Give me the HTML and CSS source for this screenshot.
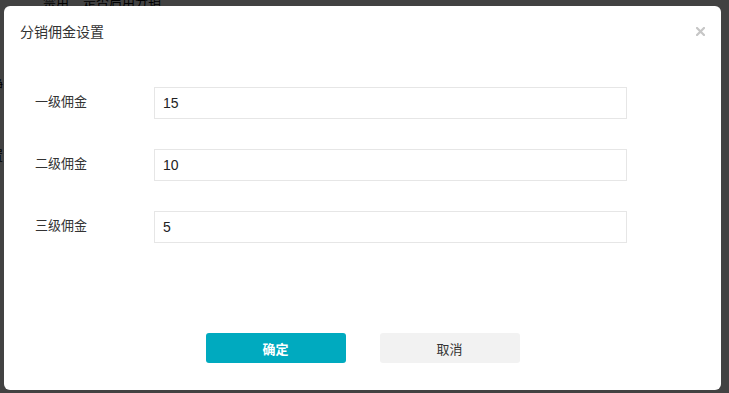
FILE: index.html
```html
<!DOCTYPE html>
<html lang="zh">
<head>
<meta charset="utf-8">
<title>分销佣金设置</title>
<link rel="stylesheet" href="styles.css">
</head>
<body>
<div class="page">
  <div class="page-head">
    <span class="ph-a">禁用</span>
    <span class="ph-b">是否启用分销</span>
  </div>
  <div class="page-side">
    <span class="side-a">静</span>
    <span class="side-b">置</span>
  </div>
</div>
<div class="overlay"></div>
<div class="modal">
  <div class="modal-header">
    <span class="modal-title">分销佣金设置</span>
    <span class="modal-close">
      <svg width="9" height="9" viewBox="0 0 9 9"><path d="M1 1L8 8M8 1L1 8" stroke="#c6c6c6" stroke-width="2.2" stroke-linecap="square"/></svg>
    </span>
  </div>
  <div class="modal-body">
    <div class="form-row">
      <label class="form-label">一级佣金</label>
      <input class="form-input" type="text" value="15">
    </div>
    <div class="form-row">
      <label class="form-label">二级佣金</label>
      <input class="form-input" type="text" value="10">
    </div>
    <div class="form-row">
      <label class="form-label">三级佣金</label>
      <input class="form-input" type="text" value="5">
    </div>
  </div>
  <div class="modal-footer">
    <button class="btn btn-primary">确定</button>
    <button class="btn btn-default">取消</button>
  </div>
</div>
</body>
</html>
```
FILE: styles.css
```css
html, body {
  margin: 0;
  padding: 0;
  width: 729px;
  height: 393px;
  overflow: hidden;
  font-family: "Liberation Sans", "Noto Sans CJK SC", sans-serif;
}
body {
  background: #ffffff;
  position: relative;
}
.page {
  position: absolute;
  inset: 0;
  background: #ffffff;
}
.page-head {
  display: flex;
  gap: 14px;
  padding-left: 43px;
  margin-top: -6px;
  font-size: 13px;
  line-height: 16px;
  color: #000;
}
.page-side {
  display: flex;
  flex-direction: column;
  font-size: 13px;
  color: #000;
  margin-left: -10px;
}
.side-a { margin-top: 64px; }
.side-b { margin-top: 52px; }
.overlay {
  position: absolute;
  inset: 0;
  background: rgba(0, 0, 0, 0.74);
}
.modal {
  position: absolute;
  left: 4px;
  top: 6px;
  width: 717px;
  height: 384px;
  background: #ffffff;
  border-radius: 6px;
  display: flex;
  flex-direction: column;
}
.modal-header {
  height: 50px;
  padding: 0 16px 0 16px;
  display: flex;
  align-items: center;
  justify-content: space-between;
}
.modal-title {
  font-size: 14px;
  color: #333;
}
.modal-close {
  display: flex;
  width: 9px;
  height: 9px;
}
.modal-body {
  margin-top: 31px;
  display: flex;
  flex-direction: column;
  gap: 30px;
  padding-left: 31px;
}
.form-row {
  display: flex;
  align-items: center;
  height: 32px;
}
.form-label {
  width: 119px;
  font-size: 13px;
  line-height: 16px;
  margin-top: -2px;
  color: #333;
}
.form-input {
  box-sizing: border-box;
  width: 473px;
  height: 32px;
  border: 1px solid #e6e6e6;
  border-radius: 0;
  padding: 0 0 0 8px;
  margin: 0;
  font-family: "Liberation Sans", "Noto Sans CJK SC", sans-serif;
  font-size: 14px;
  color: #222;
  outline: none;
}
.modal-footer {
  margin-top: 90px;
  display: flex;
  justify-content: center;
  gap: 34px;
}
.btn {
  width: 140px;
  height: 30px;
  border: none;
  border-radius: 3px;
  font-family: "Liberation Sans", "Noto Sans CJK SC", sans-serif;
  font-size: 13px;
  padding: 0;
  cursor: pointer;
}
.btn-primary {
  background: #00aabf;
  color: #fff;
  font-weight: bold;
}
.btn-default {
  background: #f2f2f2;
  color: #333;
}
```
